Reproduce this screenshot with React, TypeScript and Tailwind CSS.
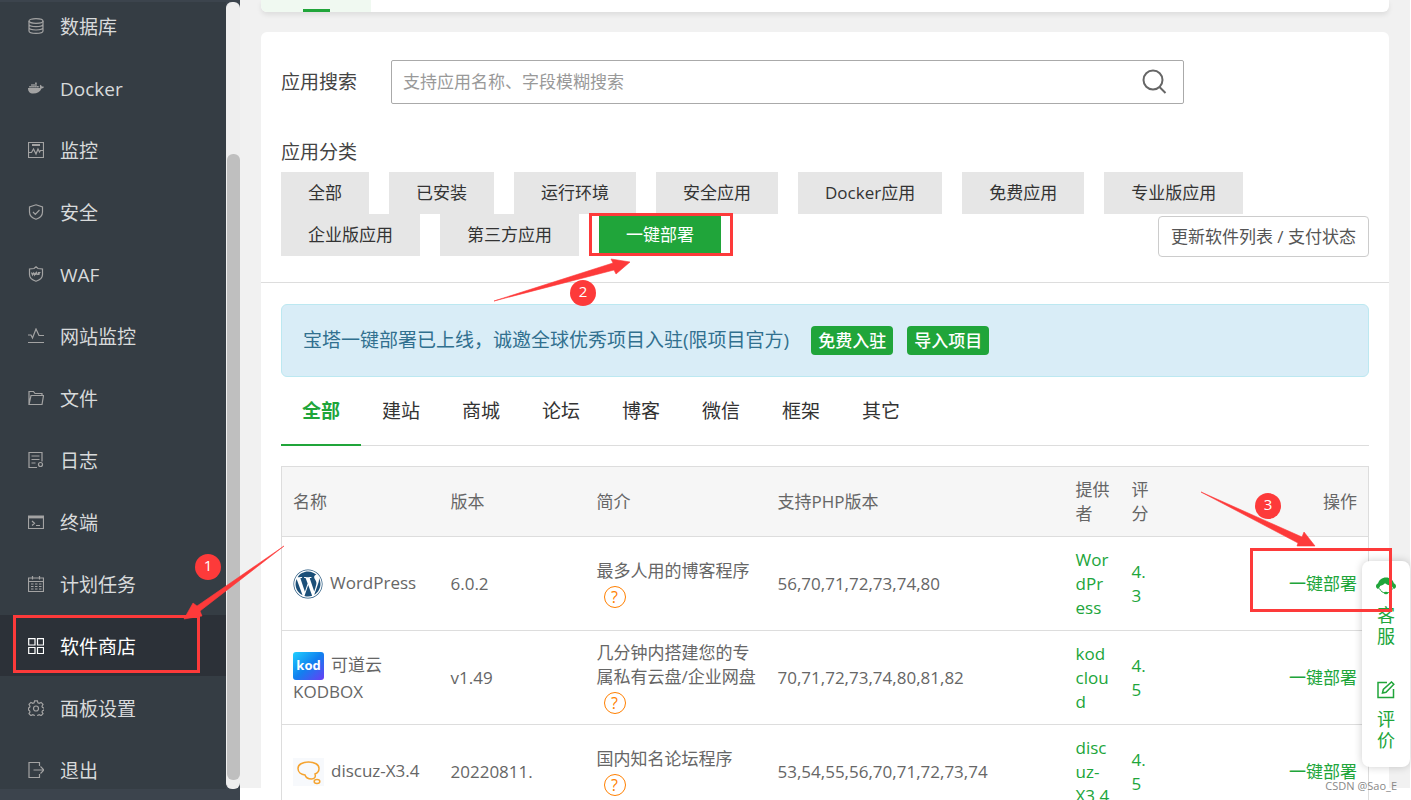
import type { ReactNode } from 'react'
import { FaDocker, FaWordpress } from 'react-icons/fa'

const menu: { label: string; icon: ReactNode }[] = [
  {
    label: '数据库',
    icon: (
      <>
        <ellipse cx="8" cy="3" rx="7" ry="2.3" />
        <path d="M1 3v10c0 1.3 3 2.4 7 2.4s7-1.1 7-2.4V3M1 6.3c0 1.3 3 2.4 7 2.4s7-1.1 7-2.4M1 9.6C1 11 4 12 8 12s7-1 7-2.4" />
      </>
    ),
  },
  { label: 'Docker', icon: <FaDocker size={16} fill="currentColor" stroke="none" /> },
  {
    label: '监控',
    icon: (
      <>
        <path d="M.5.5h15v15H.5zM1 10.500h2.500l2-3.500 2.500 5 2-5 1.500 3 1-1.500H15" />
        <path d="M4 3h8" strokeWidth="2" />
      </>
    ),
  },
  { label: '安全', icon: <path d="M8 .8 14.500 3v5c0 3.500-2.500 6-6.500 7.300C4 14 1.500 11.500 1.500 8V3zM5 8l2.300 2.300L11.500 6" /> },
  {
    label: 'WAF',
    icon: (
      <>
        <path d="M8 .8 10 2.500l4.500.5v5.500c0 3.300-2.500 5.500-6.500 6.800-4-1.300-6.500-3.500-6.500-6.800V3L6 2.500z" />
        <path d="M3.500 6.500 4.500 9l1-2 1 2 1-2.500M7.500 9l1-2.500 1 2.500M10.500 9V6.500h2M10.500 7.800h1.500" />
      </>
    ),
  },
  { label: '网站监控', icon: <path d="M0 7h3l1.500 3L8 1l3 6.500h5M0 14.500h16" /> },
  { label: '文件', icon: <path d="M1 14.500V1.500h4.500l1.500 2h7v2M1 14.500h13l1.500-9H3z" /> },
  {
    label: '日志',
    icon: (
      <>
        <path d="M9 15.500H1V.5h13v9M3.500 4h8M3.500 7.500h8M3.500 11h4" />
        <circle cx="12.500" cy="12.500" r="2" />
      </>
    ),
  },
  {
    label: '终端',
    icon: (
      <>
        <path d="M.5 2h15v12.500H.5zM4 7l2.500 2.300L4 11.500M8 11.500h4" />
        <path d="M0 3.200h16" strokeWidth="2.400" />
      </>
    ),
  },
  { label: '计划任务', icon: <path d="M.5 2h15v13.500H.5zM.5 5.500h15M4.500 0v3.500M11.500 0v3.500M3 8h2.500M7 8h2.500M11 8h2.500M3 10.500h2.500M7 10.500h2.500M11 10.500h2.500M3 13h2.500M7 13h2.500M11 13h2.500" /> },
  { label: '软件商店', icon: <path d="M.7.7H7V7H.7zM9.500.7h6V7h-6zM.7 9.500H7v6H.7zM9.500 9.500h6v6h-6z" /> },
  {
    label: '面板设置',
    icon: (
      <>
        <path d="M6.600.8h2.800l.5 2 1.300.6 1.900-1 1.900 2-1 1.800.5 1.300 1.700.5v2l-1.700.6-.5 1.300 1 1.800-1.900 1.900-1.900-1-1.300.6-.5 1.500H6.600l-.5-1.500-1.300-.6-1.900 1L1 13.700l1-1.800-.5-1.300L.5 10V8l1-.5L2 6.200 1 4.400l1.900-2 1.900 1 1.300-.6z" />
        <circle cx="8" cy="8.500" r="2.500" />
      </>
    ),
  },
  { label: '退出', icon: <path d="M11.500 4V.5H1v15h10.500V12M5.500 8h10M12.500 4.500 16 8l-3.500 3.500" /> },
]

const categories = ['全部', '已安装', '运行环境', '安全应用', 'Docker应用', '免费应用', '专业版应用', '企业版应用', '第三方应用', '一键部署']

const tabs = ['全部', '建站', '商城', '论坛', '博客', '微信', '框架', '其它']

const KodLogo = () => (
  <svg className="inline-block h-7 w-[31px] align-middle" viewBox="0 0 31 28">
    <defs>
      <linearGradient id="kod" x1="0" y1="0" x2="1" y2="1">
        <stop offset="0" stopColor="#1fd0ff" />
        <stop offset=".5" stopColor="#1180ef" />
        <stop offset="1" stopColor="#6a3df5" />
      </linearGradient>
    </defs>
    <rect width="31" height="28" rx="3" fill="url(#kod)" />
    <text x="15.500" y="18" textAnchor="middle" fontSize="13" fontWeight="700" fill="#fff">kod</text>
  </svg>
)

const DiscuzLogo = () => (
  <svg className="inline-block h-7 w-[31px] align-middle" viewBox="0 0 31 28" fill="none" stroke="#f5a32f" strokeWidth="1.500">
    <rect width="31" height="28" fill="#f7f9fc" stroke="none" />
    <path d="M12 17c-4-.5-7-3-7-6.500C5 6.500 9.500 4 15.500 4S26 6.500 26 10.500c0 2.500-1.500 4.500-4 5.500 1 3-.5 5-3.500 5-3 0-5.500-1-6.500-4z" />
    <ellipse cx="24" cy="23.500" rx="2.800" ry="2" />
  </svg>
)

const apps = [
  {
    name: 'WordPress',
    logo: <FaWordpress className="inline-block align-middle text-[#1b4f78]" size={30} />,
    version: '6.0.2',
    intro: '最多人用的博客程序',
    php: '56,70,71,72,73,74,80',
    provider: 'WordPress',
    score: '4.3',
  },
  {
    name: '可道云 KODBOX',
    logo: <KodLogo />,
    version: 'v1.49',
    intro: '几分钟内搭建您的专属私有云盘/企业网盘',
    php: '70,71,72,73,74,80,81,82',
    provider: 'kodcloud',
    score: '4.5',
  },
  {
    name: 'discuz-X3.4',
    logo: <DiscuzLogo />,
    version: '20220811.',
    intro: '国内知名论坛程序',
    php: '53,54,55,56,70,71,72,73,74',
    provider: 'discuz-X3.4',
    score: '4.5',
  },
]

function Sidebar() {
  return (
    <aside className="flex h-screen w-60 shrink-0 flex-col border-t-2 border-[#3c444d] bg-[#3c444d]">
      <div className="flex min-h-0 flex-1">
        <nav className="flex-1 overflow-hidden bg-[#353d44]">
          <ul className="-mt-[7px]">
            {menu.map(({ label, icon }) => (
              <li key={label} className="mb-px">
                <a
                  href="#"
                  className={
                    label === '软件商店'
                      ? 'flex h-[61px] items-center bg-[#2c3138] pl-7 text-[19px] text-white'
                      : 'flex h-[61px] items-center pl-7 text-[19px] text-[#d8dadb]'
                  }
                >
                  <svg
                    className={label === '软件商店' ? 'mr-4 size-4 text-white' : 'mr-4 size-4 text-[#a3a3a3]'}
                    viewBox="0 0 16 16"
                    fill="none"
                    stroke="currentColor"
                    strokeWidth="1.200"
                  >
                    {icon}
                  </svg>
                  <span className="pt-[3px]">{label}</span>
                </a>
              </li>
            ))}
          </ul>
        </nav>
        <div className="flex w-3.5 flex-col rounded-md border-l border-[#eee] bg-[#eee] pt-[152px] pb-[9px]">
          <div className="flex-1 rounded-md bg-[#bfbfbf]" />
        </div>
      </div>
      <div className="h-[11px]" />
    </aside>
  )
}

function Filters() {
  return (
    <section className="border-b border-[#ddd] px-5 pt-7 pb-[25px]">
      <div className="flex items-center">
        <label htmlFor="search" className="w-[110px] text-[19px] text-[#444]">应用搜索</label>
        <div className="flex h-11 w-[793px] items-center rounded-xs border border-[#aaa] pr-4 pl-[11px]">
          <input
            id="search"
            className="min-w-0 flex-1 text-[17px] outline-none placeholder:text-[#999]"
            placeholder="支持应用名称、字段模糊搜索"
          />
          <button aria-label="搜索">
            <svg className="size-[26px]" viewBox="0 0 26 26" fill="none" stroke="#666" strokeWidth="2">
              <circle cx="12" cy="11" r="9.500" />
              <path d="m18.500 18 6 6" />
            </svg>
          </button>
        </div>
      </div>
      <h2 className="mt-8 h-9 text-[19px] leading-8 text-[#444]">应用分类</h2>
      <div className="flex flex-wrap items-start gap-x-5">
        {categories.map((c) => (
          <button
            key={c}
            className={
              c === '一键部署'
                ? 'h-[42px] bg-[#20a53a] px-[27px] text-[17px] text-white'
                : 'h-[42px] bg-[#e6e6e6] px-[27px] text-[17px] text-[#333]'
            }
          >
            {c}
          </button>
        ))}
        <button className="mt-0.5 ml-auto h-[41px] rounded border border-[#ccc] bg-white px-3 text-[17px] text-[#555]">
          更新软件列表 / 支付状态
        </button>
      </div>
    </section>
  )
}

function AppTable() {
  return (
    <table className="mt-5 w-full table-fixed border-collapse border border-[#ddd] text-left text-[17px] leading-6 text-[#666]">
      <colgroup>
        <col className="w-[158px]" />
        <col className="w-[146px]" />
        <col className="w-[181px]" />
        <col />
        <col className="w-14" />
        <col className="w-[42px]" />
        <col className="w-[207px]" />
      </colgroup>
      <thead className="bg-[#f6f6f6]">
        <tr className="h-[70px] [&>th]:font-normal">
          <th className="px-[11px]">名称</th>
          <th className="px-[11px]">版本</th>
          <th className="px-[11px]">简介</th>
          <th className="px-[11px]">支持PHP版本</th>
          <th className="pl-3">提供者</th>
          <th className="px-3">评分</th>
          <th className="px-[11px] text-right">操作</th>
        </tr>
      </thead>
      <tbody>
        {apps.map((app) => (
          <tr key={app.name} className="h-[94px] border-t border-[#ddd]">
            <td className="px-[11px]">
              <span className="mr-[7px]">{app.logo}</span>
              {app.name}
            </td>
            <td className="px-[11px]">{app.version}</td>
            <td className="pr-2 pl-[11px]">
              {app.intro}
              <a
                href="#"
                aria-label="说明"
                className="ml-[7px] inline-flex size-[22px] items-center justify-center rounded-full border border-[#ff7f00] align-middle text-base text-[#ff7f00]"
              >
                ?
              </a>
            </td>
            <td className="px-[11px]">{app.php}</td>
            <td className="pr-2 pl-3 break-words text-[#20a53a]">{app.provider}</td>
            <td className="px-3 break-all text-[#20a53a]">{app.score}</td>
            <td className="px-[11px] text-right">
              <a href="#" className="text-[#20a53a]">一键部署</a>
            </td>
          </tr>
        ))}
      </tbody>
    </table>
  )
}

function ServiceWidget() {
  return (
    <div className="absolute top-[561px] right-px flex h-[206px] w-12 flex-col items-center gap-[34px] rounded-lg bg-white pt-4 text-lg leading-[21px] text-[#20a53a] shadow-[0_0_8px_rgba(0,0,0,0.2)]">
      <a href="#" className="flex w-[18px] flex-col items-center gap-2.5">
        <svg className="h-[18px] w-5" viewBox="0 0 20 18" fill="currentColor">
          <path d="M2 6.500C3 3 6 .5 10 .5s7 2.500 8 6c1.200.3 2 1.300 2 2.700s-1 2.600-2.500 2.600L16 9.500V8.200c-3.500.2-5.500-.7-7-2C7.500 7.500 6 8.500 4 9v.5l-1.500 2.300C1 11.800 0 10.700 0 9.200s.8-2.400 2-2.700z" />
          <path d="M3.500 11.500c1.200 2.800 3.300 4.500 6.500 4.500s5.300-1.700 6.500-4.500" fill="none" stroke="currentColor" />
          <ellipse cx="10" cy="16" rx="2" ry="1.300" />
        </svg>
        客服
      </a>
      <a href="#" className="flex w-[18px] flex-col items-center gap-2.5">
        <svg className="size-[18px]" viewBox="0 0 18 18" fill="none" stroke="currentColor" strokeWidth="1.500">
          <path d="M10 1.500H1v15h15.500V8" />
          <path d="m5.500 12 .8-3.500L14.500 1l2.300 2.200L9 11.200z" />
        </svg>
        评价
      </a>
    </div>
  )
}

const steps = [
  { n: 1, cx: 208, cy: 567, box: [14.5, 616.5, 184, 55], arrow: '284,546 197,606 193,603 184,619 202,616 200,611' },
  { n: 2, cx: 583, cy: 293, box: [590.5, 214.5, 141, 40], arrow: '494,301 613,263 611,259 630,262 616,274 614,270' },
  { n: 3, cx: 1268, cy: 506, box: [1251.5, 549.5, 139, 61], arrow: '1201,492 1302,537 1304,532 1315,546 1297,546 1298,543' },
]

function StepMarks() {
  return (
    <svg className="pointer-events-none absolute top-0 left-0 h-[800px] w-[1411px]" viewBox="0 0 1411 800" fill="#fd3a3a">
      {steps.map(({ n, cx, cy, box, arrow }) => (
        <g key={n}>
          <rect x={box[0]} y={box[1]} width={box[2]} height={box[3]} fill="none" stroke="#fd3a3a" strokeWidth="3" />
          <polygon points={arrow} stroke="#fd3a3a" strokeWidth=".6" />
          <circle cx={cx} cy={cy} r="13" />
          <text x={cx} y={cy + 4} textAnchor="middle" fontSize="15" fill="#fff">{n}</text>
        </g>
      ))}
    </svg>
  )
}

export default function App() {
  return (
    <div className="relative flex h-screen overflow-hidden bg-white pr-px font-['Open_Sans','Noto_Sans_CJK_SC',sans-serif]">
      <Sidebar />
      <main className="h-[calc(100vh-12px)] min-w-0 flex-1 bg-[#f1f1f1] px-[21px]">
        <div className="flex h-3 items-end overflow-hidden rounded-b-md bg-white shadow-[0_3px_5px_rgba(0,0,0,0.08)]">
          <div className="flex h-3 w-[110px] items-end justify-center bg-[#f0f9f1]">
            <div className="h-[3px] w-[27px] bg-[#20a53a]" />
          </div>
        </div>
        <div className="mt-5 rounded-md bg-white">
          <Filters />
          <section className="px-5 pt-[21px]">
            <div className="flex h-[73px] items-center rounded-md border border-[#bce8f1] bg-[#d9edf7] px-[21px] text-[19px] text-[#31708f]">
              宝塔一键部署已上线，诚邀全球优秀项目入驻(限项目官方)
              <button className="ml-[22px] h-[29px] rounded bg-[#20a53a] px-[7px] text-[17px] font-medium text-white">免费入驻</button>
              <button className="ml-3.5 h-[29px] rounded bg-[#20a53a] px-[7px] text-[17px] font-medium text-white">导入项目</button>
            </div>
            <div role="tablist" className="flex h-[69px] border-b border-[#ddd] text-[19px]">
              {tabs.map((t, i) => (
                <button
                  key={t}
                  role="tab"
                  aria-selected={i === 0}
                  className={
                    i === 0
                      ? 'h-[69px] w-20 border-b-2 border-[#20a53a] pt-0.5 font-bold text-[#20a53a]'
                      : 'h-[69px] w-20 border-b-2 border-transparent pt-0.5 text-[#333]'
                  }
                >
                  {t}
                </button>
              ))}
            </div>
            <AppTable />
          </section>
        </div>
      </main>
      <ServiceWidget />
      <StepMarks />
      <span className="absolute right-3.5 bottom-2 text-[11px] leading-3 text-[#888]">CSDN @Sao_E</span>
    </div>
  )
}
